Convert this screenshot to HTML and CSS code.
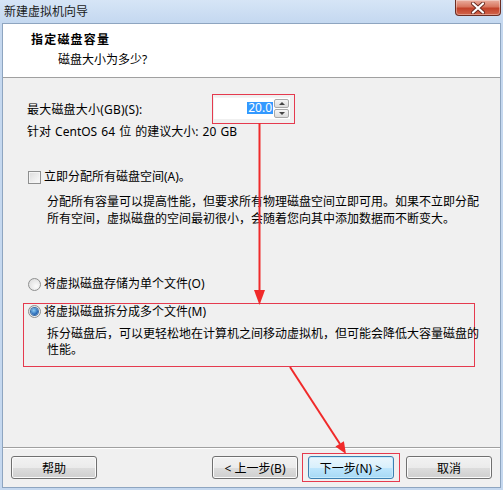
FILE: index.html
```html
<!DOCTYPE html>
<html lang="zh-CN">
<head>
<meta charset="utf-8">
<title>新建虚拟机向导</title>
<link rel="stylesheet" href="styles.css">
</head>
<body>
<div class="window">
  <div class="titlebar">
    <span class="title">新建虚拟机向导</span>
    <div class="close">
      <svg width="16" height="12" viewBox="0 0 16 12">
        <path d="M3 1.5 L13 10.5 M13 1.5 L3 10.5" stroke="#6a2a20" stroke-width="4" stroke-linecap="round"/>
        <path d="M3 1.5 L13 10.5 M13 1.5 L3 10.5" stroke="#ffffff" stroke-width="2.2" stroke-linecap="round"/>
      </svg>
    </div>
  </div>
  <div class="client">
    <div class="header">
      <div class="h-title">指定磁盘容量</div>
      <div class="h-sub">磁盘大小为多少?</div>
    </div>
    <div class="content">
      <div class="size-row">
        <span class="label">最大磁盘大小(GB)(S):</span>
        <div class="mark spin-mark">
          <div class="spin">
            <div class="spin-field"><span class="sel">20.0</span></div>
            <div class="spin-btns">
              <div class="sb"><span class="tri-up"></span></div>
              <div class="sb"><span class="tri-down"></span></div>
            </div>
          </div>
        </div>
      </div>
      <div class="hint">针对 CentOS 64 位 的建议大小: 20 GB</div>
      <div class="opt check-opt"><span class="checkbox"></span><span>立即分配所有磁盘空间(A)。</span></div>
      <p class="desc desc-alloc">分配所有容量可以提高性能，但要求所有物理磁盘空间立即可用。如果不立即分配<br>所有空间，虚拟磁盘的空间最初很小，会随着您向其中添加数据而不断变大。</p>
      <div class="opt radio-single"><span class="radio"></span><span>将虚拟磁盘存储为单个文件(O)</span></div>
      <div class="mark multi-mark">
        <div class="opt radio-multi"><span class="radio on"></span><span>将虚拟磁盘拆分成多个文件(M)</span></div>
        <p class="desc desc-split">拆分磁盘后，可以更轻松地在计算机之间移动虚拟机，但可能会降低大容量磁盘的<br>性能。</p>
      </div>
    </div>
    <div class="footer">
      <button class="btn">帮助</button>
      <div class="spacer"></div>
      <button class="btn">&lt; 上一步(B)</button>
      <div class="mark next-mark"><button class="btn default">下一步(N) &gt;</button></div>
      <button class="btn">取消</button>
    </div>
  </div>
</div>
<svg class="arrows" width="503" height="490" viewBox="0 0 503 490">
  <line x1="259.5" y1="123" x2="259.5" y2="292" stroke="#f02a2a" stroke-width="2"/>
  <polygon points="254,290 265,290 259.5,305" fill="#f02a2a"/>
  <line x1="290" y1="367" x2="340" y2="444" stroke="#f02a2a" stroke-width="2"/>
  <polygon points="335.4,446.4 343.9,441.2 346,454" fill="#f02a2a"/>
</svg>
</body>
</html>
```
FILE: styles.css
```css
* { box-sizing: border-box; }
html, body { margin: 0; padding: 0; }
body {
  width: 503px;
  height: 490px;
  overflow: hidden;
  position: relative;
  background: #c5d8ef;
  font-family: "Noto Sans", "Noto Sans CJK SC", sans-serif;
  font-size: 12px;
  color: #000;
}
.window { display: flex; flex-direction: column; height: 490px; }
.titlebar {
  height: 23px;
  flex: none;
  display: flex;
  justify-content: space-between;
  align-items: flex-start;
  padding-left: 4px;
  background: linear-gradient(#d6e5f6, #c4d8f0);
}
.title { align-self: center; line-height: 16px; color: #1a1a1a; }
.close {
  width: 46px;
  height: 16px;
  margin-right: 2px;
  border: 1px solid #6b2d22;
  border-top: none;
  border-radius: 0 0 4px 4px;
  background: linear-gradient(#eaae9f, #d8765f 45%, #c2422a 55%, #d2654b);
  box-shadow: inset 0 0 0 1px rgba(255,255,255,0.35);
  display: flex;
  align-items: center;
  justify-content: center;
}
.client {
  flex: 1;
  margin: 0 2px 2px 2px;
  border: 1px solid #8ea5c0;
  background: #f0f0f0;
  display: flex;
  flex-direction: column;
}
.header {
  height: 54px;
  flex: none;
  background: #fff;
  border-bottom: 1px solid #a0a0a0;
  padding: 8px 0 0 28px;
}
.h-title { font-weight: bold; line-height: 16px; letter-spacing: 1.2px; }
.h-sub { line-height: 16px; margin-top: 4px; padding-left: 27px; }
.content {
  flex: 1;
  padding: 16px 0 0 24px;
  display: flex;
  flex-direction: column;
  align-items: flex-start;
}
.size-row { display: flex; align-items: center; height: 30px; }
.label { width: 185px; letter-spacing: 0.2px; }
.mark { border: 1px solid #e53a4e; }
.spin-mark { width: 83px; height: 30px; padding: 2px 4px 0 1px; }
.spin {
  display: flex;
  height: 22px;
  background: #fff;
  border: 1px solid #fff;
  border-top-color: #f4f4f4;
}
.spin-field {
  width: 61px;
  display: flex;
  align-items: center;
  justify-content: flex-end;
  padding-right: 1px;
}
.sel {
  background: #3399ff;
  color: #fff;
  line-height: 12px;
  padding: 0 1px;
}
.spin-btns { display: flex; flex-direction: column; gap: 1px; padding-top: 1px; }
.sb {
  width: 15px;
  height: 9px;
  border: 1px solid #a9a9a9;
  border-radius: 2px;
  background: linear-gradient(#f6f6f6, #dcdcdc);
  display: flex;
  align-items: center;
  justify-content: center;
}
.tri-up { width: 0; height: 0; border-left: 3px solid transparent; border-right: 3px solid transparent; border-bottom: 3px solid #444; }
.tri-down { width: 0; height: 0; border-left: 3px solid transparent; border-right: 3px solid transparent; border-top: 3px solid #444; }
.hint { line-height: 16px; word-spacing: 1px; }
.opt { display: flex; align-items: center; line-height: 16px; gap: 3px; }
.check-opt { margin-top: 29px; }
.checkbox {
  width: 13px;
  height: 13px;
  margin-left: 1px;
  border: 1px solid #8e8f8f;
  background: linear-gradient(135deg, #dcdcdc, #fbfbfb);
  box-shadow: inset 0 0 0 1px #f4f4f4;
}
.radio {
  width: 13px;
  height: 13px;
  margin-left: 1px;
  border: 1px solid #8e8f8f;
  border-radius: 50%;
  background: radial-gradient(circle at 65% 65%, #fbfbfb, #d8d8d8);
  display: flex;
  align-items: center;
  justify-content: center;
}
.radio.on::after {
  content: "";
  width: 7px;
  height: 7px;
  border-radius: 50%;
  background: radial-gradient(circle at 40% 35%, #8fd0f7, #1e5fb0 70%);
  box-shadow: 0 0 0 1px #3b6fa6;
}
.desc { margin: 0 0 0 20px; line-height: 17px; white-space: nowrap; letter-spacing: 0; }
.desc-alloc { margin-top: 8px; }
.radio-single { margin-top: 49px; }
.multi-mark {
  margin: 11px 0 0 -4px;
  width: 452px;
  height: 64px;
  padding: 0 0 0 3px;
  flex: none;
}
.radio-multi { line-height: 15px; }
.desc-split { margin-top: 7px; line-height: 16px; letter-spacing: 0; }
.footer {
  height: 40px;
  flex: none;
  border-top: 1px solid #a0a0a0;
  box-shadow: inset 0 1px 0 #fff;
  display: flex;
  align-items: center;
  padding: 0 8px;
}
.spacer { flex: 1; }
.btn {
  width: 86px;
  height: 23px;
  padding: 0;
  font: inherit;
  color: #000;
  border: 1px solid #707070;
  border-radius: 3px;
  background: linear-gradient(#f2f2f2 0%, #ebebeb 50%, #dddddd 51%, #cfcfcf 100%);
  box-shadow: inset 0 0 0 1px #fbfbfb;
}
.next-mark { margin: 0 6px 0 4px; padding: 2px 5px; display: flex; }
.btn.default {
  border-color: #3c7fb1;
  background: linear-gradient(#eaf6fd 0%, #d9f0fc 50%, #bee6fd 51%, #a7d9f5 100%);
  box-shadow: inset 0 0 0 1px #c8ecfc;
}
.arrows { position: absolute; left: 0; top: 0; pointer-events: none; }
```
